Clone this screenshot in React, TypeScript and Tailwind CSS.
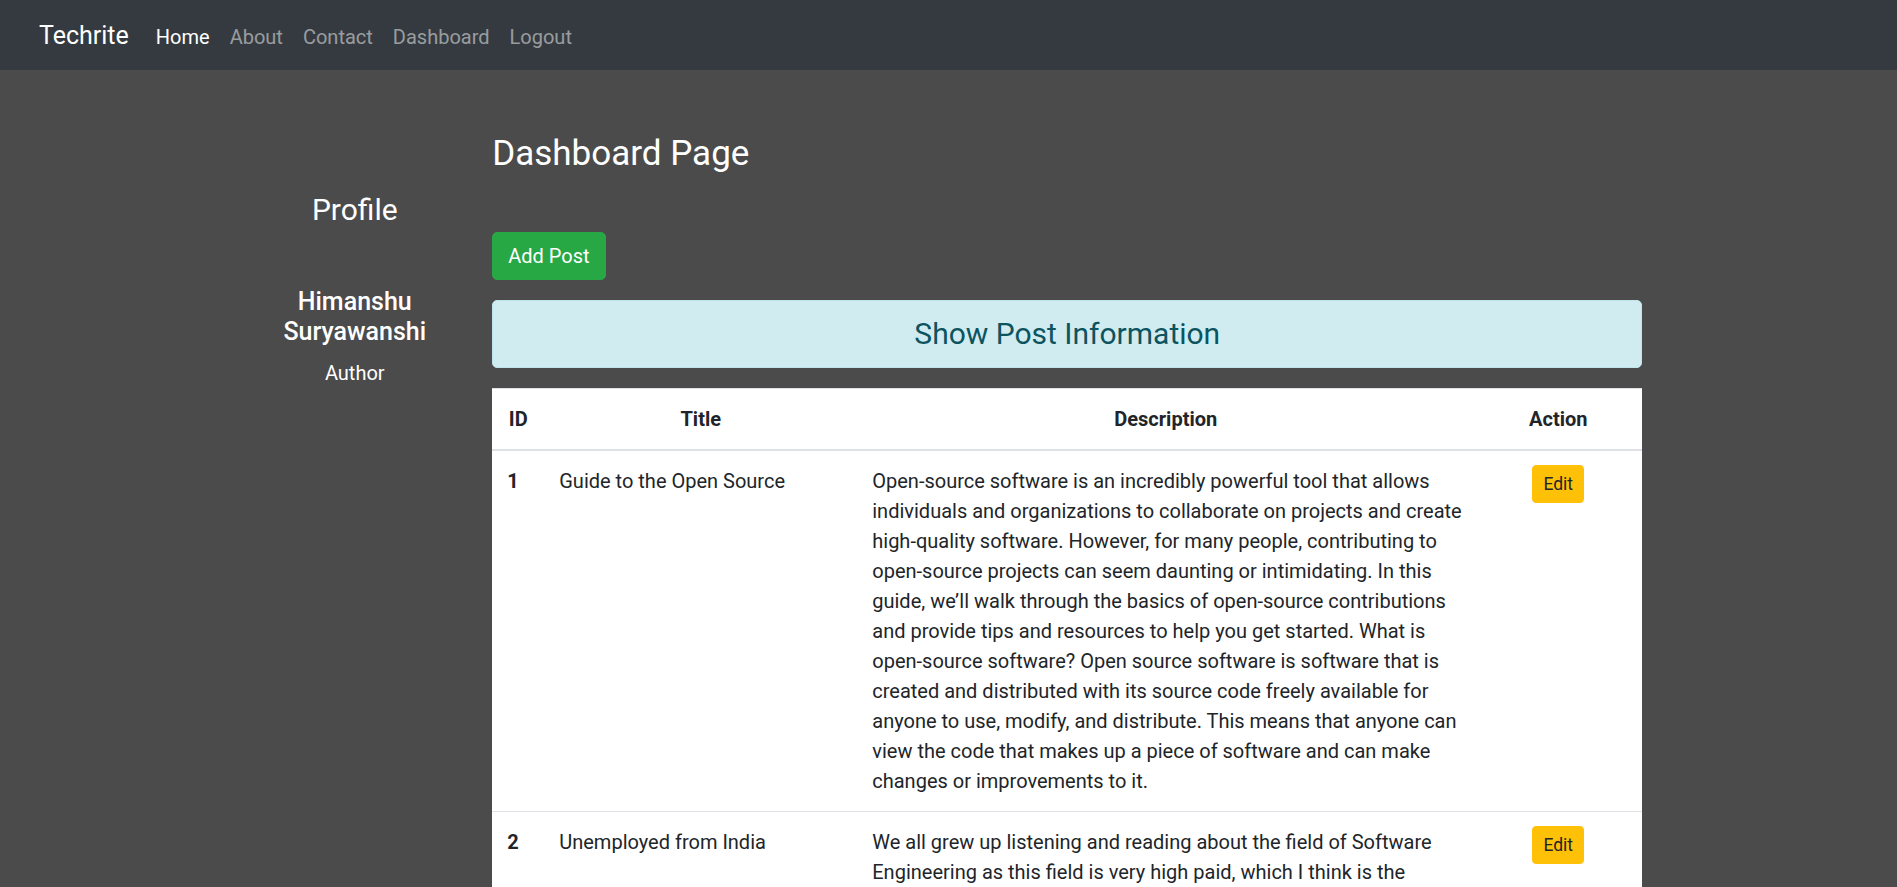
const desc1 = [
  'Open-source software is an incredibly powerful tool that allows',
  'individuals and organizations to collaborate on projects and create',
  'high-quality software. However, for many people, contributing to',
  'open-source projects can seem daunting or intimidating. In this',
  'guide, we\u2019ll walk through the basics of open-source contributions',
  'and provide tips and resources to help you get started. What is',
  'open-source software? Open source software is software that is',
  'created and distributed with its source code freely available for',
  'anyone to use, modify, and distribute. This means that anyone can',
  'view the code that makes up a piece of software and can make',
  'changes or improvements to it.',
];

const desc2 = [
  'We all grew up listening and reading about the field of Software',
  'Engineering as this field is very high paid, which I think is the',
  'main reason why so many students choose it. But the reality is',
  'quite different from what we were told, and many graduates',
  'struggle to find a job after completing their degree.',
];

const posts = [
  { id: 1, title: 'Guide to the Open Source', lines: desc1 },
  { id: 2, title: 'Unemployed from India', lines: desc2 },
];

export default function App() {
  return (
    <div className="min-h-screen bg-[#4b4b4b] font-['Roboto',sans-serif]">
      <nav className="h-[70px] bg-[#343a40] flex items-center pl-[39px]">
        <span className="mt-[1px] text-[25px] leading-[37.5px] text-white mr-[17px]">Techrite</span>
        <a className="mt-[4px] px-[10px] text-[20px] leading-[30px] text-white">Home</a>
        <a className="mt-[4px] px-[10px] text-[20px] leading-[30px] text-white/50">About</a>
        <a className="mt-[4px] px-[10px] text-[20px] leading-[30px] text-white/50">Contact</a>
        <a className="mt-[4px] px-[10px] text-[20px] leading-[30px] text-white/50">Dashboard</a>
        <a className="mt-[4px] px-[10px] text-[20px] leading-[30px] text-white/50">Logout</a>
      </nav>
      <div className="w-[1425px] mx-auto flex">
        <aside className="w-[237.5px] shrink-0 px-[18.75px] text-center text-white">
          <h4 className="mt-[121.7px] text-[30px] leading-[36px] font-normal">Profile</h4>
          <h5 className="mt-[59.5px] text-[25px] leading-[30px] font-medium">Himanshu Suryawanshi</h5>
          <p className="mt-[11px] text-[20px] leading-[30px]">Author</p>
        </aside>
        <main className="flex-1 min-w-0 px-[18.75px]">
          <h3 className="mt-[63px] text-[35px] leading-[42px] font-normal text-white">Dashboard Page</h3>
          <button className="mt-[57px] block h-[47.5px] px-[15px] rounded-[5px] bg-[#28a745] border border-[#28a745] text-white text-[20px] leading-[30px]">
            Add Post
          </button>
          <div className="mt-[20px] h-[68px] bg-[#d1ecf1] border border-[#bee5eb] rounded-[5px] flex items-center justify-center text-[#0c5460] text-[30px] leading-[36px] font-normal">
            Show Post Information
          </div>
          <table className="mt-[20px] w-full table-fixed border-collapse bg-white text-[#212529] text-[20px] leading-[30px]">
            <colgroup>
              <col className="w-[52px]" />
              <col className="w-[313px]" />
              <col className="w-[617px]" />
              <col className="w-[168px]" />
            </colgroup>
            <thead>
              <tr>
                <th className="p-[15px] text-center font-bold border-t border-b-2 border-[#dee2e6]">ID</th>
                <th className="p-[15px] text-center font-bold border-t border-b-2 border-[#dee2e6]">Title</th>
                <th className="p-[15px] text-center font-bold border-t border-b-2 border-[#dee2e6]">Description</th>
                <th className="p-[15px] text-center font-bold border-t border-b-2 border-[#dee2e6]">Action</th>
              </tr>
            </thead>
            <tbody>
              {posts.map((r) => (
                <tr key={r.id}>
                  <td className="p-[15px] align-top font-bold border-t border-[#dee2e6]">{r.id}</td>
                  <td className="p-[15px] align-top border-t border-[#dee2e6]">{r.title}</td>
                  <td className="p-[15px] align-top border-t border-[#dee2e6]">
                    {r.lines.map((l) => (
                      <span key={l} className="block whitespace-nowrap">
                        {l}{' '}
                      </span>
                    ))}
                  </td>
                  <td className="p-[15px] align-top text-center border-t border-[#dee2e6]">
                    <button className="-mt-[1px] h-[38.75px] px-[10px] rounded-[4px] bg-[#ffc107] border border-[#ffc107] text-[#212529] text-[17.5px] leading-[26.25px]">
                      Edit
                    </button>
                  </td>
                </tr>
              ))}
            </tbody>
          </table>
        </main>
      </div>
    </div>
  );
}
